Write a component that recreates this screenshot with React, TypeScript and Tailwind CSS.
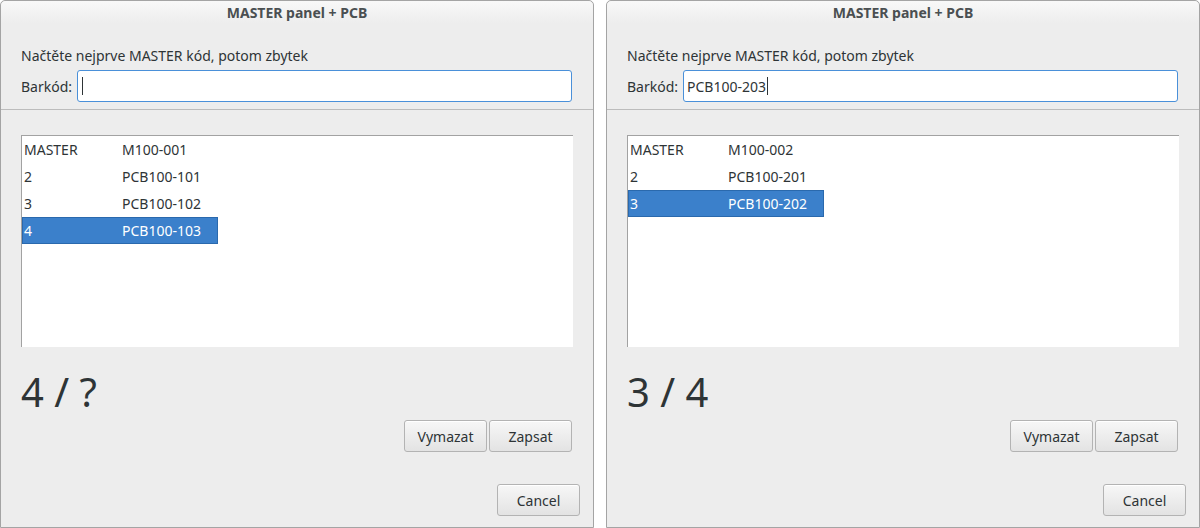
import React from "react";

type Row = { a: string; b: string; sel?: boolean };

const font = { fontFamily: '"Noto Sans", "DejaVu Sans", sans-serif' };

function Btn({ label, w = "w-[83px]" }: { label: string; w?: string }) {
  return (
    <div
      className={`${w} h-[32px] flex items-center justify-center rounded-[3px] border border-[#b3b3b3] bg-gradient-to-b from-[#f7f7f7] to-[#e3e3e3] text-[14px] text-[#2e3436] shadow-[inset_0_1px_0_#ffffff]`}
    >
      {label}
    </div>
  );
}

function Window({ value, rows, count }: { value: string; rows: Row[]; count: string }) {
  return (
    <div className="w-[594px] h-[528px] border border-[#a4a4a4] rounded-t-[5px] bg-[#ededed] flex flex-col text-[#2e3436]">
      <div className="h-[22px] flex items-center justify-center font-bold text-[14px] text-[#4a4f51] rounded-t-[5px] bg-gradient-to-b from-[#f8f8f8] to-[#ededed]">
        MASTER panel + PCB
      </div>
      <div className="mt-[22px] h-[20px] pl-[20px] flex items-center text-[14px]">
        Načtěte nejprve MASTER kód, potom zbytek
      </div>
      <div className="mt-[5px] h-[32px] pl-[20px] pr-[21px] flex items-center text-[14px]">
        <div className="w-[56px]">Barkód:</div>
        <div className="flex-1 h-[32px] rounded-[3px] border border-[#4a90d9] bg-white flex items-center pl-[3px]">
          <span>{value}</span>
          <span className="inline-block w-[1px] h-[18px] bg-[#2e3436] ml-[1px]" />
        </div>
      </div>
      <div className="mt-[7px] h-[1px] bg-[#bcbcbc]" />
      <div className="mt-[25px] mx-[20px] h-[212px] bg-white border-l border-t border-[#a2a2a2] flex flex-col text-[14px]">
        {rows.map((r, i) => (
          <div
            key={i}
            className={`h-[27px] w-[196px] flex items-center pb-[1px] ${
              r.sel ? "bg-[#3b80cb] text-white outline outline-1 outline-[#2a69ad] -outline-offset-1" : ""
            }`}
          >
            <div className="w-[98px] pl-[2px]">{r.a}</div>
            <div className="w-[98px] pl-[2px]">{r.b}</div>
          </div>
        ))}
      </div>
      <div className="mt-[21px] h-[48px] pl-[20px] flex items-center text-[40px] leading-none text-[#2e3436]">
        {count}
      </div>
      <div className="mt-[4px] pr-[21px] flex justify-end gap-[2px]">
        <Btn label="Vymazat" />
        <Btn label="Zapsat" />
      </div>
      <div className="mt-[32px] pr-[13px] flex justify-end">
        <Btn label="Cancel" />
      </div>
    </div>
  );
}

export default function App() {
  return (
    <div className="w-[1200px] h-[528px] bg-white flex gap-[12px] overflow-hidden" style={font}>
      <Window
        value=""
        count="4 / ?"
        rows={[
          { a: "MASTER", b: "M100-001" },
          { a: "2", b: "PCB100-101" },
          { a: "3", b: "PCB100-102" },
          { a: "4", b: "PCB100-103", sel: true },
        ]}
      />
      <Window
        value="PCB100-203"
        count="3 / 4"
        rows={[
          { a: "MASTER", b: "M100-002" },
          { a: "2", b: "PCB100-201" },
          { a: "3", b: "PCB100-202", sel: true },
        ]}
      />
    </div>
  );
}
